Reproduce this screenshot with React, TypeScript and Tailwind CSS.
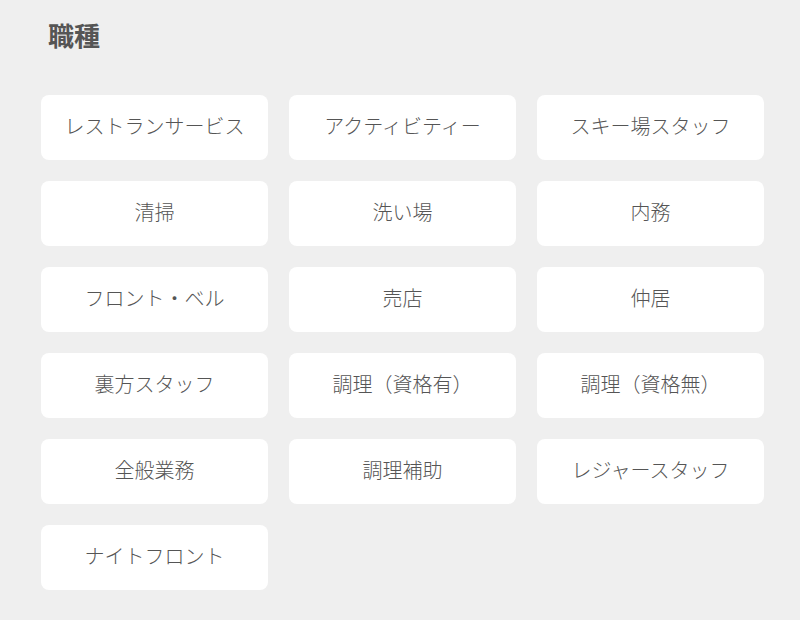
const JOBS = [
  "レストランサービス",
  "アクティビティー",
  "スキー場スタッフ",
  "清掃",
  "洗い場",
  "内務",
  "フロント・ベル",
  "売店",
  "仲居",
  "裏方スタッフ",
  "調理（資格有）",
  "調理（資格無）",
  "全般業務",
  "調理補助",
  "レジャースタッフ",
  "ナイトフロント",
];

export default function App() {
  return (
    <div
      className="min-h-[620px] w-[800px] bg-[#efefef] pl-[41px] pr-[36px] pt-[18px]"
      style={{ fontFamily: '"Noto Sans CJK JP", "Noto Sans", sans-serif' }}
    >
      <h2 className="pl-[7px] text-[26px] font-bold leading-[34px] text-[#555]">職種</h2>
      <div className="mt-[43px] grid grid-cols-3 gap-[21px]">
        {JOBS.map((job) => (
          <button
            key={job}
            type="button"
            className="flex h-[65px] items-center justify-center rounded-[8px] bg-white pb-[3px] text-[20px] font-light text-[#555]"
          >
            {job}
          </button>
        ))}
      </div>
    </div>
  );
}
